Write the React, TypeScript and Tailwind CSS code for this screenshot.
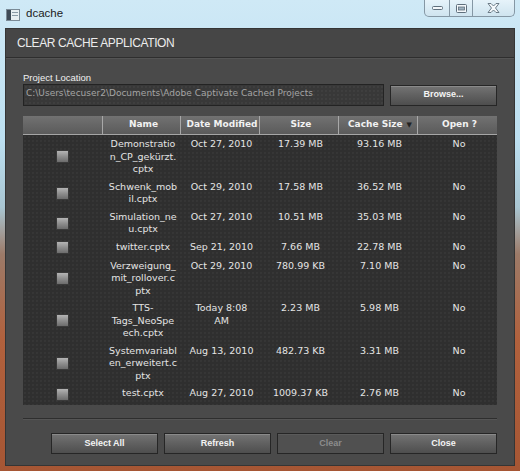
import React from 'react';

type Row = {
  name: string[];
  date: string[];
  size: string;
  cache: string;
  open: string;
};

const rows: Row[] = [
  { name: ['Demonstratio', 'n_CP_gekürzt.', 'cptx'], date: ['Oct 27, 2010'], size: '17.39 MB', cache: '93.16 MB', open: 'No' },
  { name: ['Schwenk_mob', 'il.cptx'], date: ['Oct 29, 2010'], size: '17.58 MB', cache: '36.52 MB', open: 'No' },
  { name: ['Simulation_ne', 'u.cptx'], date: ['Oct 27, 2010'], size: '10.51 MB', cache: '35.03 MB', open: 'No' },
  { name: ['twitter.cptx'], date: ['Sep 21, 2010'], size: '7.66 MB', cache: '22.78 MB', open: 'No' },
  { name: ['Verzweigung_', 'mit_rollover.c', 'ptx'], date: ['Oct 29, 2010'], size: '780.99 KB', cache: '7.10 MB', open: 'No' },
  { name: ['TTS-', 'Tags_NeoSpe', 'ech.cptx'], date: ['Today 8:08', 'AM'], size: '2.23 MB', cache: '5.98 MB', open: 'No' },
  { name: ['Systemvariabl', 'en_erweitert.c', 'ptx'], date: ['Aug 13, 2010'], size: '482.73 KB', cache: '3.31 MB', open: 'No' },
  { name: ['test.cptx'], date: ['Aug 27, 2010'], size: '1009.37 KB', cache: '2.76 MB', open: 'No' },
];

// faint dotted texture used on the dark wells
const dots =
  'bg-[radial-gradient(circle,rgba(255,255,255,0.035)_0.7px,transparent_1px)] bg-[length:4px_4px]';

function ActionButton({ label, disabled }: { label: string; disabled?: boolean }) {
  return (
    <button
      type="button"
      disabled={disabled}
      className={
        'h-[21px] w-[107px] border border-[#262626] font-["Liberation_Sans",Arial,sans-serif] text-[9px] font-bold ' +
        (disabled
          ? 'bg-[#505050] text-[#8c8c8c] shadow-[inset_0_1px_0_#5a5a5a]'
          : 'bg-[linear-gradient(180deg,#747474_0%,#626262_45%,#4e4e4e_100%)] text-[#f4f4f4] shadow-[inset_0_1px_0_#8a8a8a]')
      }
    >
      {label}
    </button>
  );
}

function Checkbox() {
  return (
    <span className="block h-[13px] w-[13px] border border-[#3a3a3a] bg-[linear-gradient(180deg,#b4b4b4_0%,#8e8e8e_50%,#6c6c6c_100%)]" />
  );
}

export default function App() {
  return (
    <div className="flex h-[471px] w-[520px] flex-col bg-[linear-gradient(180deg,#cfe9f6_0%,#bcdff0_30%,#a9c6d2_44%,#9c7a68_54%,#b1613d_72%,#a65634_100%)] px-[5px] pb-[5px]">
      {/* title bar */}
      <div className="relative flex h-[28px] items-center gap-[6px] pl-[1px]">
        <svg width="14" height="12" viewBox="0 0 14 12" className="mt-[1px]">
          <rect x="0.5" y="0.5" width="13" height="11" fill="#e8eef2" stroke="#7a8a96" />
          <rect x="1" y="1" width="4" height="10" fill="#3e4a56" />
          <rect x="6" y="3" width="6" height="1" fill="#8a9aa6" />
          <rect x="6" y="6" width="6" height="1" fill="#8a9aa6" />
        </svg>
        <span className="font-['Liberation_Sans',Arial,sans-serif] text-[11.5px] text-[#1b1b1b]">dcache</span>
        <div className="absolute right-0 top-0 flex h-[17px] overflow-hidden rounded-b-[5px] border border-t-0 border-[#8597a4] bg-[linear-gradient(180deg,#e6f3fa,#cfe4ef)]">
          <div className="flex w-[25px] items-center justify-center border-r border-[#8597a4]">
            <svg width="11" height="5" viewBox="0 0 11 5">
              <rect x="0.5" y="0.5" width="10" height="3" rx="1" fill="#f4f8fb" stroke="#5f6f7c" />
            </svg>
          </div>
          <div className="flex w-[23px] items-center justify-center border-r border-[#8597a4]">
            <svg width="11" height="9" viewBox="0 0 11 9">
              <rect x="0.5" y="0.5" width="10" height="8" rx="1" fill="#f4f8fb" stroke="#5f6f7c" />
              <rect x="2.5" y="3" width="6" height="3" fill="#9fb2c0" stroke="#5f6f7c" strokeWidth="0.8" />
            </svg>
          </div>
          <div className="flex w-[41px] items-center justify-center">
            <svg width="13" height="10" viewBox="0 0 13 10">
              <path
                d="M1 0.5 H4 L6.5 3 L9 0.5 H12 L8.5 5 L12 9.5 H9 L6.5 7 L4 9.5 H1 L4.5 5 Z"
                fill="#f4f8fb"
                stroke="#5f6f7c"
                strokeWidth="0.9"
                strokeLinejoin="round"
              />
            </svg>
          </div>
        </div>
      </div>

      {/* application panel */}
      <div className="flex flex-1 flex-col border border-[#353535] bg-[#4a4a4a]">
        <div className="flex h-[29px] items-center border-b border-[#2e2e2e] bg-[#464646] pl-[11px] shadow-[0_1px_0_#545454]">
          <h1 className="font-['Liberation_Sans',Arial,sans-serif] text-[12px] tracking-[-0.4px] text-[#ececec]">
            CLEAR CACHE APPLICATION
          </h1>
        </div>

        <div className="flex flex-1 flex-col px-[17px] pt-[14px]">
          <label className="font-['Liberation_Sans',Arial,sans-serif] text-[9.5px] leading-[11px] text-[#f0f0f0]">
            Project Location
          </label>
          <div className="mt-[1px] flex items-center gap-[6px]">
            <div className={`flex h-[22px] flex-1 items-center border border-[#232323] bg-[#383838] pb-[3px] pl-[2px] ${dots}`}>
              <span className="font-['DejaVu_Sans',Verdana,sans-serif] text-[9px] text-[#a4a4a4]">
                C:\Users\tecuser2\Documents\Adobe Captivate Cached Projects
              </span>
            </div>
            <ActionButton label="Browse..." />
          </div>

          {/* file table */}
          <div className="mt-[10px] flex h-[289px] flex-col bg-[#2f2f2f]">
            <div className="grid h-[19px] grid-cols-[79px_78px_79px_79px_79px_80px] border-b border-[#a6a6a6] bg-[linear-gradient(180deg,#727272_0%,#666666_50%,#5b5b5b_100%)] font-['DejaVu_Sans',Verdana,sans-serif] text-[9px] font-bold text-[#f2f2f2]">
              <div />
              <div className="flex items-center justify-center border-l border-[#a8a8a8] pl-1">Name</div>
              <div className="flex items-center justify-center border-l border-[#a8a8a8] pl-1">Date Modified</div>
              <div className="flex items-center justify-center border-l border-[#a8a8a8] pl-1">Size</div>
              <div className="flex items-center justify-center gap-[4px] border-l border-[#a8a8a8] pl-1">
                Cache Size
                <span className="text-[7px] text-[#222]">▼</span>
              </div>
              <div className="flex items-center justify-center border-l border-[#a8a8a8] pl-1">Open ?</div>
            </div>

            <div className={`flex-1 ${dots}`}>
              {rows.map((row, i) => (
                <div
                  key={i}
                  className="grid min-h-[19px] grid-cols-[79px_78px_79px_79px_79px_80px] pb-[2px] pt-[3px] font-['DejaVu_Sans',Verdana,sans-serif] text-[9.5px] leading-[12.5px] text-[#e4e4e4]"
                >
                  <div className="flex items-center justify-center">
                    <Checkbox />
                  </div>
                  <div className="flex flex-col items-center pl-1">
                    {row.name.map((line) => (
                      <span key={line}>{line}</span>
                    ))}
                  </div>
                  <div className="flex flex-col items-center pl-1">
                    {row.date.map((line) => (
                      <span key={line}>{line}</span>
                    ))}
                  </div>
                  <div className="pl-1 text-center">{row.size}</div>
                  <div className="pl-1 text-center">{row.cache}</div>
                  <div className="pl-1 text-center">{row.open}</div>
                </div>
              ))}
            </div>
          </div>

          <div className="mt-[13px] border-t border-[#2e2e2e] shadow-[0_1px_0_#555]" />
          <div className="flex justify-end gap-[6px] pt-[14px]">
            <ActionButton label="Select All" />
            <ActionButton label="Refresh" />
            <ActionButton label="Clear" disabled />
            <ActionButton label="Close" />
          </div>
        </div>
      </div>
    </div>
  );
}
